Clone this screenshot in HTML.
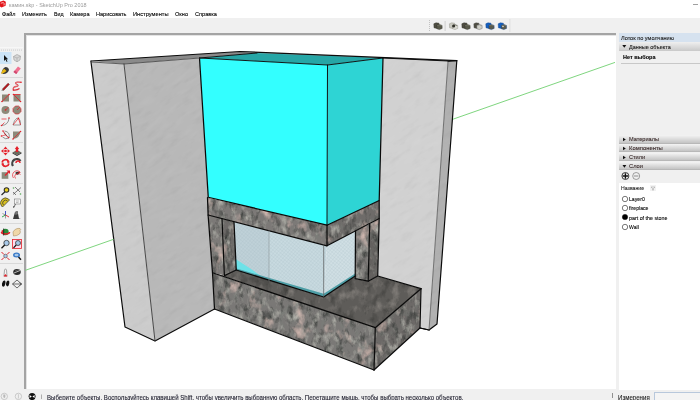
<!DOCTYPE html>
<html><head><meta charset="utf-8">
<style>
*{margin:0;padding:0;box-sizing:border-box}
html,body{width:700px;height:400px;overflow:hidden;background:#f0f0f0;font-family:"Liberation Sans",sans-serif;position:relative}
.a{position:absolute}
.t{position:absolute;white-space:nowrap;color:#000;font-size:6px;line-height:8px;transform-origin:0 0;-webkit-text-stroke:0.1px currentColor}
</style></head><body>

<div class="a" style="left:0;top:0;width:700px;height:18px;background:#fff"></div>
<svg class="a" style="left:0;top:0" width="8" height="9" viewBox="0 0 8 9"><path d="M0,1.8 L3.5,0.6 L5.8,1.8 L5.6,5.8 L1.4,7.6 L0,6.5Z" fill="#e4161b"/><path d="M0.8,3.2 L3.2,2.6 L4.2,3.4 L4,5.4" stroke="#fff" stroke-width="0.8" fill="none" opacity="0.85"/></svg>
<div class="t" style="left:8.75px;top:0.82px;color:#9a9a9a;font-size:6.0px;transform:scaleX(0.9089);-webkit-text-stroke:0;">камин.skp - SketchUp Pro 2018</div>
<div class="a" style="left:693px;top:3.5px;width:5px;height:1px;background:#a0a0a0"></div>
<div class="t" style="left:1.50px;top:10.42px;color:#000;font-size:6.0px;transform:scaleX(0.9140);">Файл</div>
<div class="t" style="left:22.00px;top:10.42px;color:#000;font-size:6.0px;transform:scaleX(0.9232);">Изменить</div>
<div class="t" style="left:53.50px;top:10.42px;color:#000;font-size:6.0px;transform:scaleX(0.8748);">Вид</div>
<div class="t" style="left:69.50px;top:10.42px;color:#000;font-size:6.0px;transform:scaleX(0.9299);">Камера</div>
<div class="t" style="left:95.50px;top:10.42px;color:#000;font-size:6.0px;transform:scaleX(0.9251);">Нарисовать</div>
<div class="t" style="left:132.50px;top:10.42px;color:#000;font-size:6.0px;transform:scaleX(0.9487);">Инструменты</div>
<div class="t" style="left:175.00px;top:10.42px;color:#000;font-size:6.0px;transform:scaleX(0.9319);">Окно</div>
<div class="t" style="left:195.00px;top:10.42px;color:#000;font-size:6.0px;transform:scaleX(0.9342);">Справка</div>
<svg class="a" style="left:0;top:0" width="700" height="34" viewBox="0 0 700 34">
<rect x="429" y="20" width="0.8" height="0.8" fill="#a8a8a8"/>
<rect x="429" y="22" width="0.8" height="0.8" fill="#a8a8a8"/>
<rect x="429" y="24" width="0.8" height="0.8" fill="#a8a8a8"/>
<rect x="429" y="26" width="0.8" height="0.8" fill="#a8a8a8"/>
<rect x="429" y="28" width="0.8" height="0.8" fill="#a8a8a8"/>
<rect x="429" y="30" width="0.8" height="0.8" fill="#a8a8a8"/>
<rect x="444.6" y="21" width="1" height="10" fill="#d0d0d0"/>
<rect x="509.5" y="19" width="0.8" height="13" fill="#dadada"/>
<path d="M433.8,23.8 L436.0,22.8 L439.0,23.2 L439.2,27.4 L436.8,28.4 L434.0,27.8Z" fill="#4e4d42" stroke="#2e2e26" stroke-width="0.4"/><path d="M436.8,25.2 L439.40000000000003,24.4 L442.1,25.4 L442.2,28.4 L439.40000000000003,29.6 L436.90000000000003,28.8Z" fill="#5a5a4c" stroke="#2e2e26" stroke-width="0.4"/><path d="M437.2,25.6 L439.40000000000003,24.9 L441.7,25.7" stroke="#8a8a78" stroke-width="0.5" fill="none"/>
<path d="M449.4,23.8 L451.59999999999997,22.8 L454.59999999999997,23.2 L454.79999999999995,27.4 L452.4,28.4 L449.59999999999997,27.8Z" fill="#c8c8c0" stroke="#8a8a80" stroke-width="0.4"/><path d="M452.4,25.2 L455.0,24.4 L457.7,25.4 L457.79999999999995,28.4 L455.0,29.6 L452.5,28.8Z" fill="#d8d8d0" stroke="#8a8a80" stroke-width="0.4"/><path d="M452.79999999999995,25.6 L455.0,24.9 L457.29999999999995,25.7" stroke="#3a3a30" stroke-width="0.5" fill="none"/>
<circle cx="453.6" cy="26" r="1.5" fill="#2e2e26"/>
<path d="M461.8,23.8 L464.0,22.8 L467.0,23.2 L467.2,27.4 L464.8,28.4 L462.0,27.8Z" fill="#4e4d42" stroke="#2e2e26" stroke-width="0.4"/><path d="M464.8,25.2 L467.40000000000003,24.4 L470.1,25.4 L470.2,28.4 L467.40000000000003,29.6 L464.90000000000003,28.8Z" fill="#5a5a4c" stroke="#2e2e26" stroke-width="0.4"/><path d="M465.2,25.6 L467.40000000000003,24.9 L469.7,25.7" stroke="#8a8a78" stroke-width="0.5" fill="none"/>
<path d="M473.8,23.8 L476.0,22.8 L479.0,23.2 L479.2,27.4 L476.8,28.4 L474.0,27.8Z" fill="#4e4d42" stroke="#555" stroke-width="0.4"/><path d="M476.8,25.2 L479.40000000000003,24.4 L482.1,25.4 L482.2,28.4 L479.40000000000003,29.6 L476.90000000000003,28.8Z" fill="#d0d0c8" stroke="#555" stroke-width="0.4"/><path d="M477.2,25.6 L479.40000000000003,24.9 L481.7,25.7" stroke="#888" stroke-width="0.5" fill="none"/>
<path d="M485.8,23.8 L488.0,22.8 L491.0,23.2 L491.2,27.4 L488.8,28.4 L486.0,27.8Z" fill="#1560c0" stroke="#0a3a80" stroke-width="0.4"/><path d="M488.8,25.2 L491.40000000000003,24.4 L494.1,25.4 L494.2,28.4 L491.40000000000003,29.6 L488.90000000000003,28.8Z" fill="#5a5a4c" stroke="#0a3a80" stroke-width="0.4"/><path d="M489.2,25.6 L491.40000000000003,24.9 L493.7,25.7" stroke="#8a8a78" stroke-width="0.5" fill="none"/>
<path d="M498.2,23.8 L500.4,22.8 L503.4,23.2 L503.59999999999997,27.4 L501.2,28.4 L498.4,27.8Z" fill="#1560c0" stroke="#0a3a80" stroke-width="0.4"/><path d="M501.2,25.2 L503.8,24.4 L506.5,25.4 L506.59999999999997,28.4 L503.8,29.6 L501.3,28.8Z" fill="#5a5a4c" stroke="#0a3a80" stroke-width="0.4"/><path d="M501.59999999999997,25.6 L503.8,24.9 L506.09999999999997,25.7" stroke="#8a8a78" stroke-width="0.5" fill="none"/>
<circle cx="503" cy="26.5" r="0.7" fill="#fff"/>
</svg>
<div class="a" style="left:24px;top:33px;width:592px;height:356px;background:#fff;border-left:2px solid #a4a4a4;border-top:2px solid #a4a4a4;box-shadow:inset 1px 1px 0 #e4e4e4"></div>
<svg class="a" style="left:0;top:0" width="24" height="300" viewBox="0 0 24 300">
<rect x="1" y="49.6" width="0.9" height="0.9" fill="#c4c4c4"/>
<rect x="3" y="49.6" width="0.9" height="0.9" fill="#c4c4c4"/>
<rect x="5" y="49.6" width="0.9" height="0.9" fill="#c4c4c4"/>
<rect x="7" y="49.6" width="0.9" height="0.9" fill="#c4c4c4"/>
<rect x="9" y="49.6" width="0.9" height="0.9" fill="#c4c4c4"/>
<rect x="11" y="49.6" width="0.9" height="0.9" fill="#c4c4c4"/>
<rect x="13" y="49.6" width="0.9" height="0.9" fill="#c4c4c4"/>
<rect x="15" y="49.6" width="0.9" height="0.9" fill="#c4c4c4"/>
<rect x="17" y="49.6" width="0.9" height="0.9" fill="#c4c4c4"/>
<rect x="19" y="49.6" width="0.9" height="0.9" fill="#c4c4c4"/>
<rect x="21" y="49.6" width="0.9" height="0.9" fill="#c4c4c4"/>
<rect x="0" y="47.3" width="23" height="0.8" fill="#fafafa"/>
<rect x="0" y="52" width="11.5" height="12" fill="#cce4f7"/>
<rect x="0" y="77" width="23" height="0.9" fill="#d6d6d6"/>
<rect x="0" y="142" width="23" height="0.9" fill="#d6d6d6"/>
<rect x="0" y="183" width="23" height="0.9" fill="#d6d6d6"/>
<rect x="0" y="223" width="23" height="0.9" fill="#d6d6d6"/>
<rect x="0" y="263" width="23" height="0.9" fill="#d6d6d6"/>
<g transform="translate(5.5,58)"><path d="M-1.5,-3 L-1.5,3 L0,1.6 L1.2,4 L2,3.6 L0.9,1.3 L2.6,1.2Z" fill="#111"/></g>
<g transform="translate(17,58)"><path d="M-3.5,-1.5 L0,-3.5 L3.5,-1.8 L3,2 L0,3.8 L-3,2Z" fill="#d6d6d6" stroke="#9a9a9a" stroke-width="0.6"/><path d="M-3.5,-1.5 L0,0 L3.5,-1.8 M0,0 L0,3.8" stroke="#9a9a9a" stroke-width="0.5" fill="none"/></g>
<g transform="translate(5.5,70)"><path d="M-4,3 Q-3,-2 0,-3 Q3,-3 3.5,0 Q2,4 -2,4Z" fill="#3a3a3a"/><path d="M-4.5,4 Q-3,-1 -1,-1 L1,1 Q-1,3 -4.5,4Z" fill="#e8b810"/></g>
<g transform="translate(17,70)"><path d="M-3.5,2 L1,-3.5 L3.8,-1.5 L-0.8,4Z" fill="#f07090"/><path d="M-3.5,2 L-0.8,4 L0.5,2.5 L-2.2,0.4Z" fill="#d04a70"/></g>
<g transform="translate(5.5,86)"><path d="M-3.2,3.2 L2.6,-2.8 L3.8,-1.6 L-2,4.4Z" fill="#c0161c" stroke="#4a0a0a" stroke-width="0.5"/><path d="M-3.2,3.2 L-4.2,5 L-2,4.4Z" fill="#8a8a80"/></g>
<g transform="translate(17,86)"><path d="M-3.5,4 Q-4.5,1 -1,0.5 Q2.5,0 0,-1.5 Q-3,-3 0.5,-3.8 Q3,-4.2 4,-3.5 M-3.5,4 Q0,4.5 2.5,2.5" stroke="#d83038" stroke-width="1.3" fill="none"/><path d="M-3.5,4 Q-4.5,1 -1,0.5 Q2.5,0 0,-1.5 Q-3,-3 0.5,-3.8 Q3,-4.2 4,-3.5" stroke="#f6c8c8" stroke-width="0.4" fill="none"/><circle cx="4" cy="-3.8" r="0.8" fill="#e4202a"/><circle cx="-3.6" cy="4" r="0.8" fill="#e4202a"/></g>
<g transform="translate(5.5,98)"><rect x="-3.5" y="-3.5" width="7" height="7" fill="#8c8a7a"/><path d="M-3.5,3.5 L3.5,-3.5" stroke="#e4202a" stroke-width="0.8"/><circle cx="-3.5" cy="3.5" r="0.8" fill="#e4202a"/><circle cx="3.5" cy="-3.5" r="0.8" fill="#e4202a"/></g>
<g transform="translate(17,98)"><rect x="-3.5" y="-3.5" width="7" height="7" fill="#8c8a7a"/><path d="M-3.5,-3.5 L3.5,3.5 M-3.5,-3.5 L3.5,-3.5" stroke="#e4202a" stroke-width="0.8"/><circle cx="-3.5" cy="-3.5" r="0.8" fill="#e4202a"/><circle cx="3.5" cy="3.5" r="0.8" fill="#e4202a"/></g>
<g transform="translate(5.5,110)"><circle r="4" fill="#8c8a7a"/><path d="M0,0 L2.8,-2.8" stroke="#e4202a" stroke-width="0.8"/><circle r="0.8" fill="#e4202a"/></g>
<g transform="translate(17,110)"><path d="M-1.6,-4 L1.6,-4 L4,-1.6 L4,1.6 L1.6,4 L-1.6,4 L-4,1.6 L-4,-1.6Z" fill="#8c8a7a" stroke="#e4202a" stroke-width="0.6"/><path d="M0,0 L2.8,-2.8" stroke="#e4202a" stroke-width="0.8"/></g>
<g transform="translate(5.5,122)"><path d="M-4,3.5 Q3,3 3.5,-4" stroke="#777" stroke-width="0.8" fill="none"/><path d="M-4,3.5 L-1,0.5 M-4,-3 L1,-3" stroke="#e4202a" stroke-width="0.7"/><circle cx="-4" cy="3.5" r="0.8" fill="#e4202a"/><circle cx="3.5" cy="-4" r="0.8" fill="#e4202a"/></g>
<g transform="translate(17,122)"><path d="M-4,3 L3.5,3 Q4,-3 0,-4 Q-3,-2 -4,3" stroke="#777" stroke-width="0.7" fill="none"/><path d="M-4,3 L1.5,-3.8 L3.5,3" stroke="#e4202a" stroke-width="0.7" fill="none"/><circle cx="1.5" cy="-3.8" r="0.8" fill="#e4202a"/></g>
<g transform="translate(5.5,135)"><path d="M-1,-4 Q5,-3 3.5,3 Q0,5 -3,2" stroke="#777" stroke-width="0.8" fill="none"/><path d="M-2.5,-4 L0,0 L3,2.5 M0,0 L-4,1" stroke="#e4202a" stroke-width="0.6"/><circle cx="-2.5" cy="-4" r="0.8" fill="#e4202a"/><circle cx="3" cy="2.5" r="0.8" fill="#e4202a"/><circle cx="-4" cy="1" r="0.8" fill="#e4202a"/></g>
<g transform="translate(17,135)"><path d="M-4,4 L-4,-3.5 L3.5,-3.5 Q3,3 -4,4Z" fill="#8c8a7a"/><path d="M-4,4 L3.5,-3.5" stroke="#e4202a" stroke-width="0.7"/><circle cx="3.5" cy="-3.5" r="0.8" fill="#e4202a"/><circle cx="-4" cy="4" r="0.8" fill="#e4202a"/></g>
<g transform="translate(5.5,151)"><path d="M0,-4.5 L2,-2 L-2,-2Z M0,4.5 L2,2 L-2,2Z M-4.5,0 L-2,2 L-2,-2Z M4.5,0 L2,2 L2,-2Z" fill="#e4202a"/><rect x="-1.2" y="-1.2" width="2.4" height="2.4" fill="#e4202a"/></g>
<g transform="translate(17,151)"><path d="M-4.5,1.5 L0,-1 L4.5,1.5 L0,4Z" fill="#6a6a5e"/><path d="M-4.5,1.5 L0,4 L4.5,1.5 L4.5,2.5 L0,5 L-4.5,2.5Z" fill="#333"/><path d="M-1.2,1 L-1.2,-2 L-2.2,-2 L0,-5 L2.2,-2 L1.2,-2 L1.2,1Z" fill="#e4202a"/></g>
<g transform="translate(5.5,163)"><path d="M-3.5,-0.5 A3.5,3.5 0 0 1 3,-1.5" stroke="#e4202a" stroke-width="1.6" fill="none"/><path d="M3.5,0.5 A3.5,3.5 0 0 1 -3,1.5" stroke="#e4202a" stroke-width="1.6" fill="none"/><path d="M1.5,-3 L4.5,-1 L2,0.5Z M-1.5,3 L-4.5,1 L-2,-0.5Z" fill="#e4202a"/></g>
<g transform="translate(17,163)"><path d="M-4,3 A4,4 0 0 1 3.5,-2" stroke="#444" stroke-width="2.2" fill="none"/><path d="M-1,0 A2,2 0 0 1 3,0" stroke="#e4202a" stroke-width="1.4" fill="none"/></g>
<g transform="translate(5.5,175)"><rect x="-4" y="-3" width="7" height="7" fill="#8a8a7a" stroke="#eee" stroke-width="0.4"/><path d="M-0.5,0.5 L3,-3" stroke="#e4202a" stroke-width="1.2"/><path d="M1,-4.5 L4.5,-4.5 L4.5,-1Z" fill="#e4202a"/></g>
<g transform="translate(17,175)"><path d="M-3.5,3 A4,4 0 0 1 3.5,-2.5" stroke="#e4202a" stroke-width="0.7" fill="none"/><path d="M-1.5,3.5 A3,3 0 0 1 3.5,-0.5" stroke="#e4202a" stroke-width="0.7" fill="none"/><path d="M-2,-2 Q0,-4 3,-3 L1,0Z" fill="#333"/><path d="M-0.5,-0.5 L3,-3" stroke="#e4202a" stroke-width="1"/></g>
<g transform="translate(5.5,191)"><circle cx="1" cy="-1" r="2.8" fill="#2a2a2a"/><circle cx="1" cy="-1" r="1.8" fill="#e8d020"/><path d="M-0.5,0.8 L-4,4" stroke="#2a2a2a" stroke-width="1.2"/></g>
<g transform="translate(17,191)"><path d="M-4,3.5 L4,-3.5 M-2,-4 L3,1 M-4,1 L-1,4" stroke="#333" stroke-width="0.6" fill="none"/><circle cx="3.5" cy="3" r="0.8" fill="#5a5"/><circle cx="-3.5" cy="-3" r="0.8" fill="#5a5"/></g>
<g transform="translate(5.5,203)"><path d="M-4,3 A5,5 0 0 1 3,-4 L4,-3 L-3,4Z" fill="#d8c020" stroke="#333" stroke-width="0.7"/><path d="M-2,2 A2.5,2.5 0 0 1 2,-2" stroke="#333" stroke-width="0.7" fill="none"/></g>
<g transform="translate(17,203)"><rect x="-2.5" y="-4" width="6" height="5" fill="#f6f6f6" stroke="#666" stroke-width="0.5"/><path d="M-1,-2 L2,-2 M-1,-0.5 L1.5,-0.5" stroke="#666" stroke-width="0.4"/><path d="M-3,4 L-1.5,1" stroke="#333" stroke-width="0.7"/><circle cx="-3.3" cy="4" r="0.7" fill="#333"/></g>
<g transform="translate(5.5,215)"><path d="M0,0 L0,-4 " stroke="#3040c0" stroke-width="0.9"/><path d="M0,0 L3.5,2" stroke="#e4202a" stroke-width="0.9"/><path d="M0,0 L-3.5,2" stroke="#20a040" stroke-width="0.9"/><path d="M0,0 L-3,-1.5 M0,0 L0,3.5" stroke="#444" stroke-width="0.5"/></g>
<g transform="translate(17,215)"><path d="M-4,4 L-2,-3 L0.5,-4 L2,3.5 L4,4Z" fill="#3a3a3a"/><path d="M-2,-3 L0.5,-4 L1,-1 L-1.5,0Z" fill="#777"/></g>
<g transform="translate(5.5,232)"><circle r="3.2" fill="#2a8a3a"/><path d="M-4,0 A4,2 0 0 0 4,0" stroke="#e4202a" stroke-width="1.6" fill="none"/><path d="M-1.8,-3.5 L-1.8,3.5" stroke="#1a1a1a" stroke-width="0.8"/><path d="M-4.5,-1 L-2.5,-2 L-2.5,1Z" fill="#e4202a"/></g>
<g transform="translate(17,232)"><path d="M-3.5,4 L-4,0 Q-3,-2 -1,-3 Q1,-4 3,-3.5 Q4.5,-3 3,-1.5 Q4,0 2.5,2 Q0,4 -3.5,4Z" fill="#f0d8a8" stroke="#a08050" stroke-width="0.5"/></g>
<g transform="translate(5.5,244)"><circle cx="1" cy="-1" r="2.7" fill="#a8c8e8" stroke="#222" stroke-width="0.7"/><path d="M-0.8,1 L-4,4.2" stroke="#111" stroke-width="1.3"/></g>
<g transform="translate(17,244)"><rect x="-4.5" y="-4.5" width="9" height="9" fill="#fde" stroke="#e4202a" stroke-width="0.8"/><circle cx="1" cy="-1" r="2.5" fill="#a8c8e8" stroke="#222" stroke-width="0.7"/><path d="M-0.8,1 L-3.5,3.8" stroke="#111" stroke-width="1.2"/></g>
<g transform="translate(5.5,256)"><circle r="1.8" fill="#a8c8e8" stroke="#333" stroke-width="0.5"/><path d="M-4,-4 L-1.5,-1.5 M4,-4 L1.5,-1.5 M-4,4 L-1.5,1.5 M4,4 L1.5,1.5" stroke="#e4202a" stroke-width="1"/></g>
<g transform="translate(17,256)"><ellipse cx="-0.5" cy="-1" rx="3.5" ry="2.5" fill="#3a7ac8"/><ellipse cx="-0.5" cy="-1" rx="2" ry="1.3" fill="#a8c8e8"/><path d="M1.5,1 L4,3.8" stroke="#111" stroke-width="1.4"/></g>
<g transform="translate(5.5,272)"><path d="M-1.5,4 L-1,-2 Q0,-4.5 1,-2 L1.5,4Z" fill="#f4f4f4" stroke="#555" stroke-width="0.5"/><path d="M-2,4.5 L0,2 L2,4.5Z" fill="#e4202a"/></g>
<g transform="translate(17,272)"><ellipse rx="3.8" ry="3" fill="#2a2a2a"/><path d="M-3,1 L3,-1.5" stroke="#ddd" stroke-width="0.8"/><path d="M-2,-1 L2,-2.5" stroke="#888" stroke-width="0.5"/></g>
<g transform="translate(5.5,284)"><ellipse cx="-1.8" cy="0" rx="1.6" ry="3.2" fill="#111" transform="rotate(12)"/><ellipse cx="2" cy="-1" rx="1.6" ry="3" fill="#111" transform="rotate(12)"/></g>
<g transform="translate(17,284)"><path d="M-4.5,0 L0,-4 L4.5,0 L0,4Z" fill="none" stroke="#333" stroke-width="0.7"/><path d="M-4.5,0 L4.5,0" stroke="#333" stroke-width="0.7"/><path d="M2.5,-1.5 L4.5,0 L2.5,1.5" stroke="#333" stroke-width="0.6" fill="none"/></g>
</svg>
<svg class="a" style="left:0;top:0" width="700" height="400" viewBox="0 0 700 400">
<defs>
<filter id="stone" x="0" y="0" width="700" height="400" filterUnits="userSpaceOnUse" color-interpolation-filters="sRGB">
 <feTurbulence type="fractalNoise" baseFrequency="0.065 0.05" numOctaves="4" seed="7" result="n"/>
 <feColorMatrix in="n" type="matrix" values="0 0 0 0 0.82  0 0 0 0 0.72  0 0 0 0 0.69  4.2 0 0 0 -2.55" result="pink"/>
 <feGaussianBlur in="pink" stdDeviation="0.3" result="pinkb"/>
 <feTurbulence type="fractalNoise" baseFrequency="0.16 0.09" numOctaves="4" seed="2" result="n2"/>
 <feColorMatrix in="n2" type="matrix" values="0 0 0 0 0.24  0 0 0 0 0.25  0 0 0 0 0.24  0 2.6 0 0 -1.25" result="dark"/>
 <feColorMatrix in="n2" type="matrix" values="0 0 0 0 0.70  0 0 0 0 0.70  0 0 0 0 0.67  0 0 2.6 0 -1.32" result="light"/>
 <feTurbulence type="fractalNoise" baseFrequency="0.2 0.12" numOctaves="3" seed="19" result="n3"/>
 <feColorMatrix in="n3" type="matrix" values="0 0 0 0 0.48  0 0 0 0 0.51  0 0 0 0 0.48  0 1.2 0 0 -0.58" result="green"/>
 <feMerge result="tex"><feMergeNode in="SourceGraphic"/><feMergeNode in="green"/><feMergeNode in="dark"/><feMergeNode in="light"/><feMergeNode in="pinkb"/></feMerge>
 <feComposite in="tex" in2="SourceAlpha" operator="in"/>
</filter>
<filter id="stoneTop" x="0" y="0" width="700" height="400" filterUnits="userSpaceOnUse" color-interpolation-filters="sRGB">
 <feTurbulence type="fractalNoise" baseFrequency="0.11 0.08" numOctaves="4" seed="2" result="n2"/>
 <feColorMatrix in="n2" type="matrix" values="0 0 0 0 0.22  0 0 0 0 0.22  0 0 0 0 0.21  0 1.8 0 0 -0.88" result="dark"/>
 <feColorMatrix in="n2" type="matrix" values="0 0 0 0 0.58  0 0 0 0 0.56  0 0 0 0 0.54  0 0 1.8 0 -0.9" result="light"/>
 <feMerge result="tex"><feMergeNode in="SourceGraphic"/><feMergeNode in="dark"/><feMergeNode in="light"/></feMerge>
 <feComposite in="tex" in2="SourceAlpha" operator="in"/>
</filter>
<filter id="marbleN" x="0" y="0" width="900" height="900" filterUnits="userSpaceOnUse" color-interpolation-filters="sRGB">
 <feTurbulence type="fractalNoise" baseFrequency="0.06 0.18" numOctaves="4" seed="11" result="n"/>
 <feColorMatrix in="n" type="matrix" values="0 0 0 0 1  0 0 0 0 1  0 0 0 0 1  0.12 0 0 0 -0.055" result="w"/>
 <feColorMatrix in="n" type="matrix" values="0 0 0 0 0  0 0 0 0 0  0 0 0 0 0  0 -0.1 0 0 0.048" result="k"/>
 <feMerge><feMergeNode in="w"/><feMergeNode in="k"/></feMerge>
</filter>
<pattern id="marbleP" width="900" height="900" x="-200" y="-200" patternUnits="userSpaceOnUse" patternTransform="rotate(-35 350 200)">
 <rect width="900" height="900" fill="#000" filter="url(#marbleN)"/>
</pattern>
<pattern id="hatch" width="2.6" height="2.6" patternUnits="userSpaceOnUse" patternTransform="rotate(40)">
 <path d="M0,0 L0,2.6 M0,0 L2.6,0" stroke="#9fb4bc" stroke-width="0.55"/>
</pattern>
</defs>
<polygon points="91,61 240,51.5 257,53 124,64" fill="#8a8a8a" />
<polygon points="240,51.5 456.8,60.7 448,61.5 257,53" fill="#a2a2a2" />
<polygon points="91,62 124,64 155,341 125,327" fill="#cbcbcb" />
<polygon points="124,64 199.5,58 208.25,197.25 207.5,197.5 208.1,215 212.5,272.75 214.5,309 155,341" fill="#b8b8b8" />
<polygon points="383,58 448,61 429,330 420,328 421,288.7 378,276 379,218.5 379.2,200.5" fill="#d1d1d1" />
<polygon points="448,61.5 456.8,60.7 437,324 429,330" fill="#b0b0b0" />
<polygon points="91,62 124,64 155,341 125,327" fill="url(#marbleP)" />
<polygon points="124,64 199.5,58 208.25,197.25 207.5,197.5 208.1,215 212.5,272.75 214.5,309 155,341" fill="url(#marbleP)" />
<polygon points="383,58 448,61 429,330 420,328 421,288.7 378,276 379,218.5 379.2,200.5" fill="url(#marbleP)" />
<polygon points="448,61.5 456.8,60.7 437,324 429,330" fill="url(#marbleP)" />
<polygon points="199.5,58 257,53 383,58 327.5,65" fill="#26a6a6" />
<polygon points="199.5,58 327.5,65 327,225.2 208.25,197.25" fill="#33ffff" />
<polygon points="327.5,65 383,58 379.2,200.5 327,225.2" fill="#2ed4d4" />
<polygon points="234,222 327,245.8 323.7,297 234,270.6" fill="#c8dae0" />
<polygon points="234,222 269,231 269,280.8 234,270.6" fill="#bfd1d8" />
<polygon points="327,245.8 355.5,231 355.2,276 323.7,297" fill="#d0dfe4" />
<polygon points="234,222 327,245.8 355.5,231 355.2,276 323.7,297 234,270.6" fill="url(#hatch)" opacity="0.55"/>
<polygon points="234,258 234,270.6 264,278 248,267" fill="#6ee2e8" />
<polygon points="234,267.8 323.7,293.8 323.7,297 234,270.6" fill="#4e9ea6" />
<polygon points="323.7,293.8 355.2,273.5 355.2,276 323.7,297" fill="#4e9ea6" />
<g filter="url(#stoneTop)">
<polygon points="212.5,272.75 224.4,275.6 236.25,270 323.7,297 355.2,276 355.2,278.7 368.2,281.2 377.7,276 421,288.7 375.3,327.7" fill="#5e5c59" />
</g>
<g filter="url(#stone)">
<polygon points="207.5,197.5 327,225.2 327,245.8 208.1,215" fill="#7c7977" />
<polygon points="327,225.2 379.2,200.5 379.2,218.5 327,245.8" fill="#6e6b69" />
<polygon points="208.1,215 222,218.3 224.4,275.6 212.5,272.75" fill="#7c7977" />
<polygon points="222,218.3 234,222 236.25,270 224.4,275.6" fill="#6c6967" />
<polygon points="355.5,231 369.7,224 368.2,281.2 355.2,278.7" fill="#7c7977" />
<polygon points="369.7,224 379.2,218.5 377.7,276 368.2,281.2" fill="#64615f" />
<polygon points="212.5,272.75 375.3,327.7 374,370 214.5,309" fill="#7a7876" />
<polygon points="375.3,327.7 421,288.7 420,328 374,370" fill="#6c6967" />
</g>
<g fill="none" stroke-linejoin="round" stroke-linecap="round">
<polyline points="91,61 240,51.5 456.8,60.7" stroke="#0c0c0c" stroke-width="1.2"/>
<polyline points="91,61 91,62 125,327 155,341 214.5,309" stroke="#0c0c0c" stroke-width="1.2"/>
<polyline points="456.8,60.7 437,324 429,330 420,328" stroke="#0c0c0c" stroke-width="1.2"/>
<polyline points="374,370 214.5,309" stroke="#0c0c0c" stroke-width="1.2"/>
<polyline points="374,370 420,328 421,288.7" stroke="#0c0c0c" stroke-width="1.2"/>
<polyline points="448,61.5 456.8,60.7" stroke="#0a0a0a" stroke-width="0.95"/>
<polyline points="383,58 448,61" stroke="#0a0a0a" stroke-width="0.95"/>
<polyline points="199.5,58 327.5,65 383,58" stroke="#0a0a0a" stroke-width="0.95"/>
<polyline points="199.5,58 257,53" stroke="#0a0a0a" stroke-width="0.95"/>
<polyline points="327.5,65 327,225.2" stroke="#0a0a0a" stroke-width="0.95"/>
<polyline points="199.5,58 208.25,197.25 327,225.2 379.2,200.5 383,58" stroke="#0a0a0a" stroke-width="1.25"/>
<polyline points="207.5,197.5 208.1,215 327,245.8 379.2,218.5 379.2,200.5" stroke="#0a0a0a" stroke-width="1.25"/>
<polyline points="327,225.2 327,245.8" stroke="#0a0a0a" stroke-width="1.25"/>
<polyline points="208.1,215 212.5,272.75 375.3,327.7 421,288.7" stroke="#0a0a0a" stroke-width="1.25"/>
<polyline points="212.5,272.75 214.5,309" stroke="#0a0a0a" stroke-width="1.25"/>
<polyline points="375.3,327.7 374,370" stroke="#0a0a0a" stroke-width="1.25"/>
<polyline points="222,218.3 224.4,275.6 236.25,270 234,222" stroke="#0a0a0a" stroke-width="1.25"/>
<polyline points="355.5,231 355.2,278.7 368.2,281.2 377.7,276 379.2,218.5" stroke="#0a0a0a" stroke-width="1.25"/>
<polyline points="369.7,224 368.2,281.2" stroke="#0a0a0a" stroke-width="1.25"/>
<polyline points="377.7,276 421,288.7" stroke="#0a0a0a" stroke-width="1.25"/>
<polyline points="236.25,270 323.7,297 355.2,276" stroke="#0a0a0a" stroke-width="1.25"/>
<polyline points="420,328 429,330" stroke="#0a0a0a" stroke-width="1.25"/>
<polyline points="448,61.5 429,330" stroke="#4a4a4a" stroke-width="0.7"/>
<polyline points="124,64 155,341" stroke="#3a3a3a" stroke-width="0.9"/>
<polyline points="91.5,62 124,64 199.5,58" stroke="#3c3c3c" stroke-width="0.8"/>
<polyline points="269,231 269,280.8" stroke="#8a9498" stroke-width="0.6"/>
<polyline points="323.7,246 323.7,297" stroke="#555" stroke-width="0.7"/>
</g>
<line x1="25.4" y1="270.3" x2="113.6" y2="239.3" stroke="#70d070" stroke-width="0.9"/>
<line x1="453" y1="119.2" x2="615" y2="62.4" stroke="#70d070" stroke-width="0.9"/>
</svg>
<div class="a" style="left:619px;top:33px;width:81px;height:9px;background:#d6e2ef"></div>
<div class="t" style="left:620.70px;top:34.32px;color:#1a1a1a;font-size:6.0px;transform:scaleX(0.9286);">Лоток по умолчанию</div>
<div class="a" style="left:619px;top:42px;width:81px;height:9px;background:linear-gradient(#efefef,#c9c9c9)"></div>
<svg class="a" style="left:622px;top:44px" width="5" height="5"><path d="M0.3,1 L4.3,1 L2.3,3.8Z" fill="#111"/></svg>
<div class="t" style="left:629.30px;top:42.92px;color:#1a1a1a;font-size:6.0px;transform:scaleX(0.9121);">Данные объекта</div>
<div class="t" style="left:622.90px;top:53.22px;color:#000;font-size:6.0px;transform:scaleX(0.9183);font-weight:bold;">Нет выбора</div>
<div class="a" style="left:621px;top:63px;width:79px;height:1px;background:#c8c8c8"></div>
<div class="a" style="left:619px;top:135.0px;width:81px;height:8.6px;background:linear-gradient(#f4f4f4,#c4c4c4);border-bottom:0.5px solid #b8b8b8"></div>
<svg class="a" style="left:622px;top:137.3px" width="5" height="5"><path d="M1,0.8 L3.8,2.5 L1,4.2Z" fill="#111"/></svg>
<div class="t" style="left:628.70px;top:135.12px;color:#3a2a2a;font-size:6.0px;transform:scaleX(0.9334);">Материалы</div>
<div class="a" style="left:619px;top:143.9px;width:81px;height:8.6px;background:linear-gradient(#f4f4f4,#c4c4c4);border-bottom:0.5px solid #b8b8b8"></div>
<svg class="a" style="left:622px;top:146.2px" width="5" height="5"><path d="M1,0.8 L3.8,2.5 L1,4.2Z" fill="#111"/></svg>
<div class="t" style="left:628.70px;top:144.02px;color:#3a2a2a;font-size:6.0px;transform:scaleX(0.9774);">Компоненты</div>
<div class="a" style="left:619px;top:152.8px;width:81px;height:8.6px;background:linear-gradient(#f4f4f4,#c4c4c4);border-bottom:0.5px solid #b8b8b8"></div>
<svg class="a" style="left:622px;top:155.1px" width="5" height="5"><path d="M1,0.8 L3.8,2.5 L1,4.2Z" fill="#111"/></svg>
<div class="t" style="left:628.70px;top:152.92px;color:#3a2a2a;font-size:6.0px;transform:scaleX(0.9306);">Стили</div>
<div class="a" style="left:619px;top:161.7px;width:81px;height:8.6px;background:linear-gradient(#f4f4f4,#c4c4c4);border-bottom:0.5px solid #b8b8b8"></div>
<svg class="a" style="left:622px;top:164.0px" width="5" height="5"><path d="M0.5,1 L4.3,1 L2.4,3.8Z" fill="#111"/></svg>
<div class="t" style="left:628.70px;top:161.82px;color:#3a2a2a;font-size:6.0px;transform:scaleX(0.9596);">Слои</div>
<svg class="a" style="left:619px;top:170px" width="30" height="12"><circle cx="6.4" cy="6" r="3.5" fill="none" stroke="#111" stroke-width="0.8"/><path d="M6.4,3.3 L6.4,8.7 M3.7,6 L9.1,6" stroke="#111" stroke-width="1.3"/><circle cx="17.2" cy="6" r="3.5" fill="none" stroke="#666" stroke-width="0.6"/><path d="M15,6 L19.4,6" stroke="#666" stroke-width="0.7"/></svg>
<div class="a" style="left:619px;top:183px;width:81px;height:207px;background:#fff"></div>
<div class="t" style="left:620.90px;top:184.45px;color:#222;font-size:6.2px;transform:scaleX(0.8338);">Название</div>
<div class="a" style="left:649.5px;top:185px;width:6.5px;height:6px;background:#f2f2f2"></div>
<svg class="a" style="left:650px;top:185.5px" width="6" height="5"><path d="M1,1 L5,1 L3.3,2.8 L3.3,4.2 L2.7,4.2 L2.7,2.8Z" fill="none" stroke="#999" stroke-width="0.5"/></svg>
<svg class="a" style="left:621px;top:194.7px" width="8" height="8"><circle cx="4" cy="4" r="2.7" fill="#fff" stroke="#222" stroke-width="0.6"/></svg>
<div class="t" style="left:629.00px;top:195.05px;color:#000;font-size:6.2px;transform:scaleX(0.8328);">Layer0</div>
<svg class="a" style="left:621px;top:203.9px" width="8" height="8"><circle cx="4" cy="4" r="2.7" fill="#fff" stroke="#222" stroke-width="0.6"/></svg>
<div class="t" style="left:629.00px;top:204.25px;color:#000;font-size:6.2px;transform:scaleX(0.8317);">fireplace</div>
<svg class="a" style="left:621px;top:213.3px" width="8" height="8"><circle cx="4" cy="4" r="2.7" fill="#fff" stroke="#222" stroke-width="0.6"/><circle cx="4" cy="4" r="2.6" fill="#000"/></svg>
<div class="t" style="left:629.00px;top:213.65px;color:#000;font-size:6.2px;transform:scaleX(0.8589);">part of the stone</div>
<svg class="a" style="left:621px;top:222.6px" width="8" height="8"><circle cx="4" cy="4" r="2.7" fill="#fff" stroke="#222" stroke-width="0.6"/></svg>
<div class="t" style="left:629.00px;top:222.95px;color:#000;font-size:6.2px;transform:scaleX(0.8283);">Wall</div>
<svg class="a" style="left:0;top:389px" width="50" height="11"><circle cx="4.3" cy="7.4" r="3.2" fill="none" stroke="#b0b0b0" stroke-width="0.6"/><path d="M3.3,5.5 L5.3,5.5 L5.3,8 L4.3,9.2 L3.3,8Z" fill="#b8b8b8"/><circle cx="18.4" cy="7.4" r="3.2" fill="none" stroke="#b0b0b0" stroke-width="0.6"/><path d="M18.4,5.2 L18.4,9.5" stroke="#b0b0b0" stroke-width="0.6"/><circle cx="32.1" cy="7.6" r="3.5" fill="#111"/><path d="M29.6,6.1 L29.6,9.1 L31.8,7.6Z M34.6,6.1 L34.6,9.1 L32.4,7.6Z" fill="#fff"/><rect x="41.3" y="5.5" width="0.7" height="4.5" fill="#909090"/></svg>
<div class="t" style="left:46.70px;top:394.11px;color:#1a1a2a;font-size:7.2px;transform:scaleX(0.8453);-webkit-text-stroke:0.1px currentColor;">Выберите объекты. Воспользуйтесь клавишей Shift, чтобы увеличить выбранную область. Перетащите мышь, чтобы выбрать несколько объектов.</div>
<div class="a" style="left:612.3px;top:393px;width:0.7px;height:5px;background:#909090"></div>
<div class="t" style="left:617.70px;top:394.11px;color:#1a1a1a;font-size:7.2px;transform:scaleX(0.8515);-webkit-text-stroke:0.1px currentColor;">Измерения</div>
<div class="a" style="left:654px;top:391.5px;width:46px;height:9px;background:#f4f4f4;border-top:1px solid #b8c8dc;border-left:1px solid #b8c8dc"></div>
</body></html>
